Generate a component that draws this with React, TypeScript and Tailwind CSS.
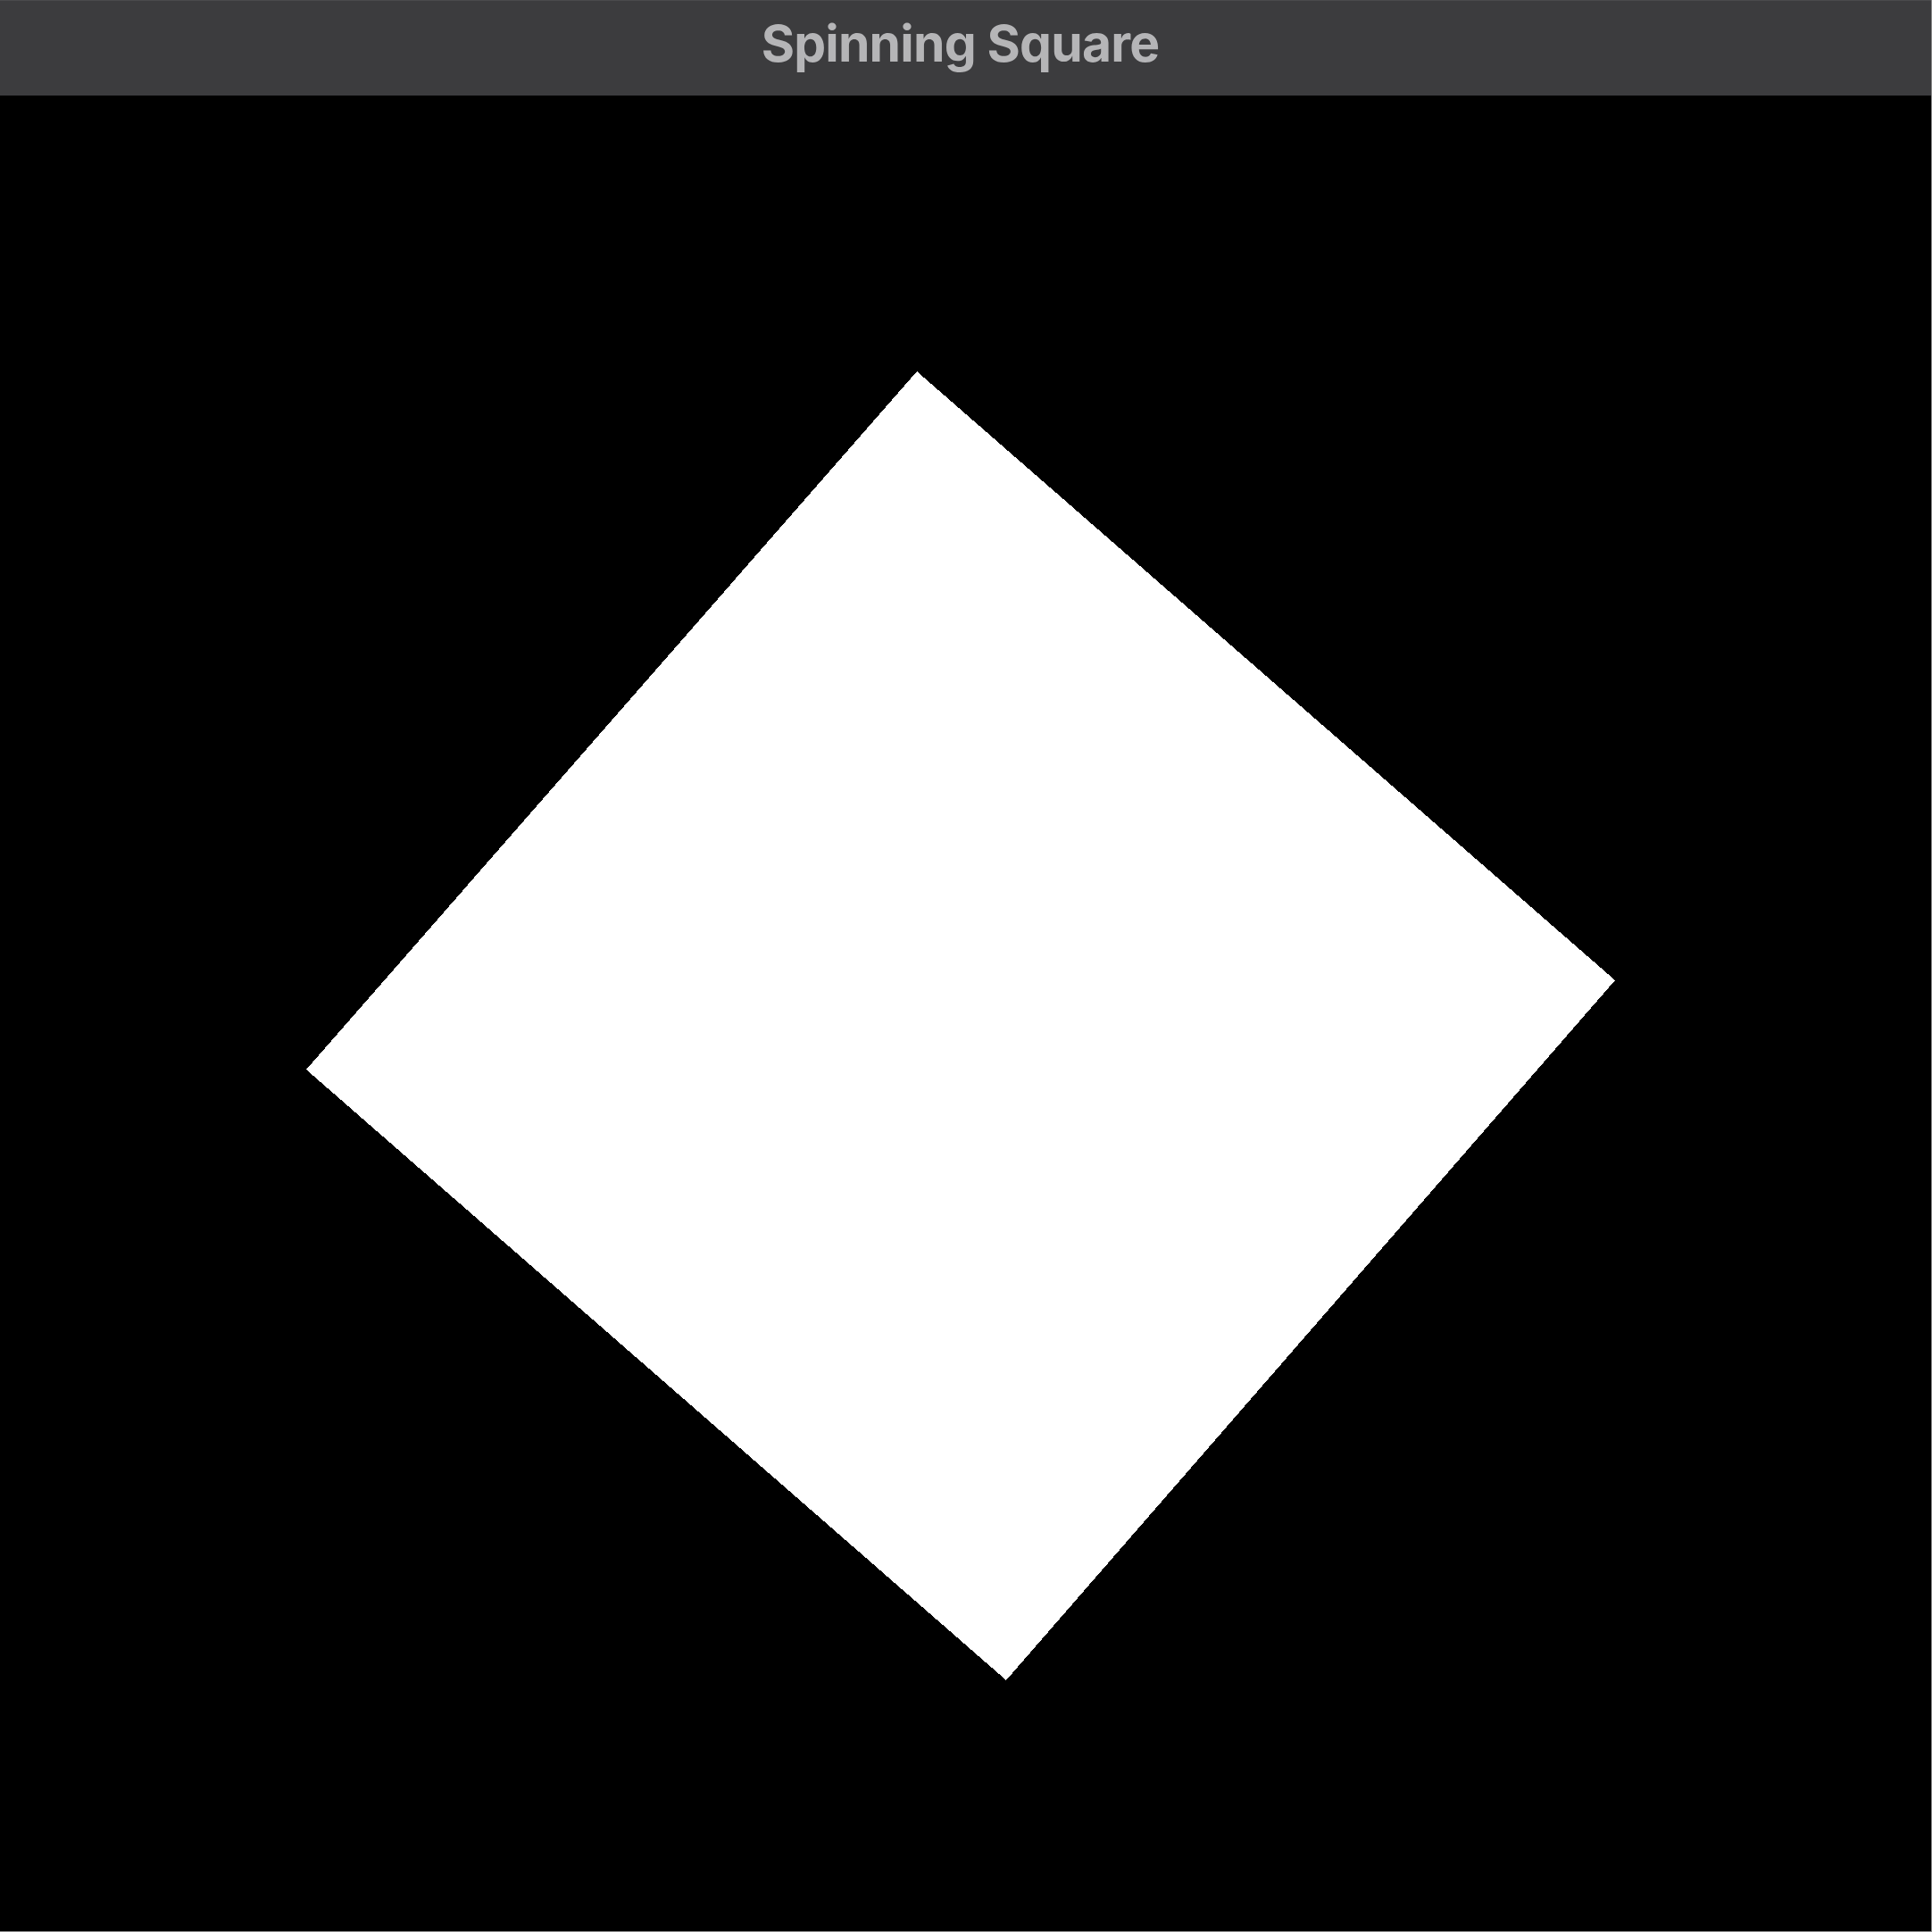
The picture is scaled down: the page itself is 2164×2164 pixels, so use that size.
import React from "react";

// corners of the rotated square, in canvas coordinates
const corners = "1027,309 1809,991 1127,1775 343,1091";

export default function App() {
  return (
    <div className="w-[2164px] h-[2164px] flex flex-col bg-black border-r border-b border-[#8a8a8a]">
      <header className="h-[107px] shrink-0 bg-[#3c3c3e] border-t border-[#4a4a4c] flex items-center justify-center pr-[12px] pb-[12px]">
        <h1 className="text-[57px] font-bold text-[#b5b5b7] tracking-[-0.8px] font-['Inter','Liberation_Sans',sans-serif] leading-none">
          Spinning Square
        </h1>
      </header>

      <main className="flex-1 relative">
        <svg
          className="absolute inset-0"
          width="2163"
          height="2056"
          viewBox="0 0 2163 2056"
          shapeRendering="crispEdges"
        >
          <polygon points={corners} fill="#ffffff" />
        </svg>
      </main>
    </div>
  );
}
